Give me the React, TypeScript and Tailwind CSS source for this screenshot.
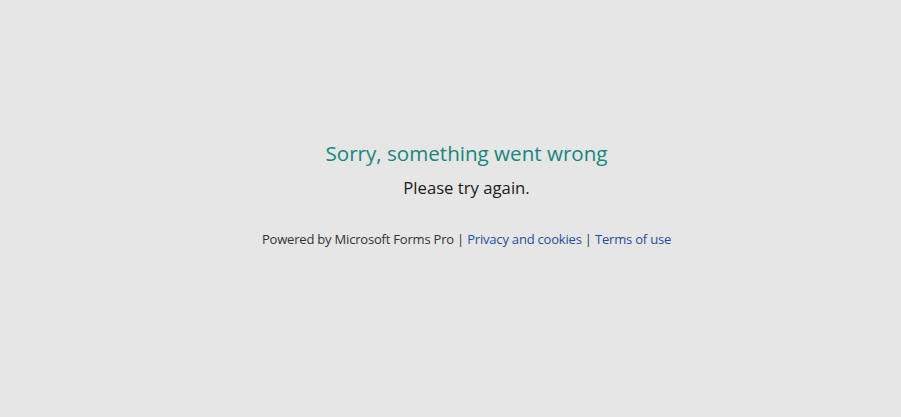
export default function App() {
  return (
    <div
      className="min-h-[417px] w-full bg-[#e6e6e6] flex flex-col items-center pt-[139px] pl-[32px]"
      style={{ fontFamily: '"Open Sans", "Noto Sans", sans-serif' }}
    >
      <h1 className="text-[20.6px] leading-[28px] text-[#16877c]">Sorry, something went wrong</h1>
      <p className="mt-[10px] text-[16.7px] leading-[22px] text-[#1b1b1b]">Please try again.</p>
      <div className="mt-[30px] text-[13px] leading-[20px] tracking-[-0.2px] text-[#333333]">
        Powered by Microsoft Forms Pro |{" "}
        <a href="#" className="text-[#1f4e9e]">Privacy and cookies</a> |{" "}
        <a href="#" className="text-[#1f4e9e]">Terms of use</a>
      </div>
    </div>
  )
}
